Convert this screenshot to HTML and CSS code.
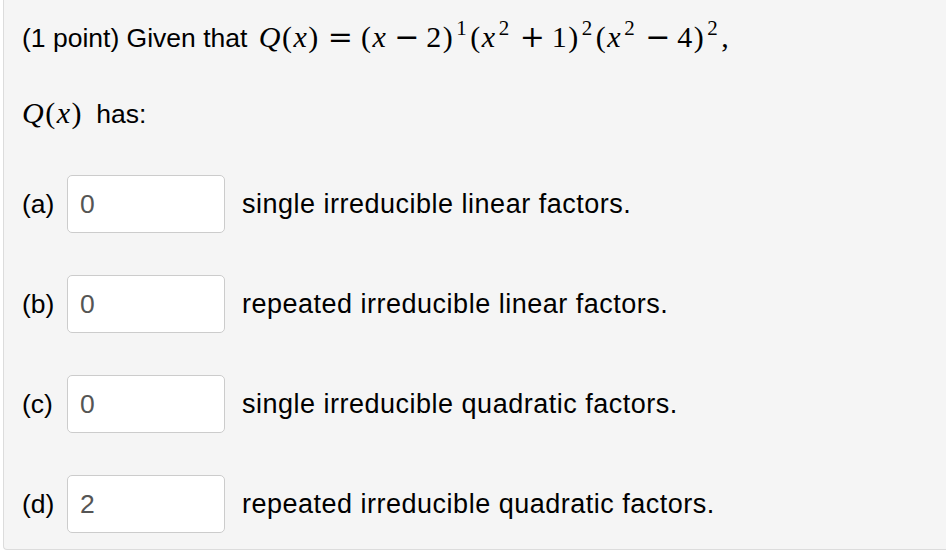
FILE: index.html
```html
<!DOCTYPE html>
<html>
<head>
<meta charset="utf-8">
<link rel="stylesheet" href="styles.css">
</head>
<body>
<div class="problem">
  <p class="line first">(1 point) Given that <span class="math"><i>Q</i>(<i>x</i>)<span class="rel">=</span>(<i>x</i><span class="bin">−</span>2)<sup>1</sup>(<i>x</i><sup>2</sup><span class="bin">+</span>1)<sup>2</sup>(<i>x</i><sup>2</sup><span class="bin">−</span>4)<sup>2</sup>,</span></p>
  <p class="line second"><span class="math short"><i>Q</i>(<i>x</i>)</span> has:</p>
  <div class="rows">
    <div class="row"><span class="lbl">(a)</span><input class="answer" type="text" value="0"><span class="desc">single irreducible linear factors.</span></div>
    <div class="row"><span class="lbl">(b)</span><input class="answer" type="text" value="0"><span class="desc">repeated irreducible linear factors.</span></div>
    <div class="row"><span class="lbl">(c)</span><input class="answer" type="text" value="0"><span class="desc">single irreducible quadratic factors.</span></div>
    <div class="row"><span class="lbl">(d)</span><input class="answer" type="text" value="2"><span class="desc">repeated irreducible quadratic factors.</span></div>
  </div>
</div>
</body>
</html>
```
FILE: styles.css
```css
html, body {
  margin: 0;
  padding: 0;
  background: #ffffff;
  overflow: hidden;
}
body {
  width: 946px;
  height: 552px;
}
.problem {
  box-sizing: border-box;
  margin-left: 3px;
  width: 960px;
  height: 550px;
  background: #f5f5f5;
  border-left: 1px solid #dcdcdc;
  border-bottom: 1px solid #dcdcdc;
  border-bottom-left-radius: 4px;
  padding: 18px 0 0 18px;
  font-family: "Liberation Sans", Arial, Helvetica, sans-serif;
  font-size: 26.5px;
  color: #000;
}
.line {
  margin: 0;
  line-height: 38px;
  white-space: nowrap;
}
.second {
  margin-top: 35px;
}
.math {
  font-family: "Liberation Serif", "Times New Roman", serif;
  font-size: 30px;
  letter-spacing: 1.5px;
  color: #000;
  margin-left: 4px;
}
.math.short {
  margin-left: 0;
  margin-right: 6px;
}
.math i {
  font-style: italic;
}
.math sup {
  font-size: 70%;
  vertical-align: 0;
  position: relative;
  top: -0.55em;
  margin-left: 2px;
  margin-right: 2px;
}
.rel, .bin {
  font-family: "DejaVu Serif", serif;
  font-weight: 300;
  letter-spacing: 0;
}
.rel {
  margin: 0 8px;
}
.bin {
  margin: 0 7px;
}
.rows {
  margin-top: 42px;
  display: flex;
  flex-direction: column;
  gap: 42px;
}
.row {
  display: flex;
  align-items: center;
  height: 58px;
}
.lbl {
  width: 45px;
}
.answer {
  box-sizing: border-box;
  width: 158px;
  height: 58px;
  border: 1px solid #cccccc;
  border-radius: 5px;
  background: #ffffff;
  padding: 0 12px;
  font-family: "Liberation Sans", Arial, Helvetica, sans-serif;
  font-size: 26.5px;
  color: #555;
  outline: none;
}
.desc {
  margin-left: 17px;
  font-size: 27px;
  letter-spacing: 0.5px;
}
```
